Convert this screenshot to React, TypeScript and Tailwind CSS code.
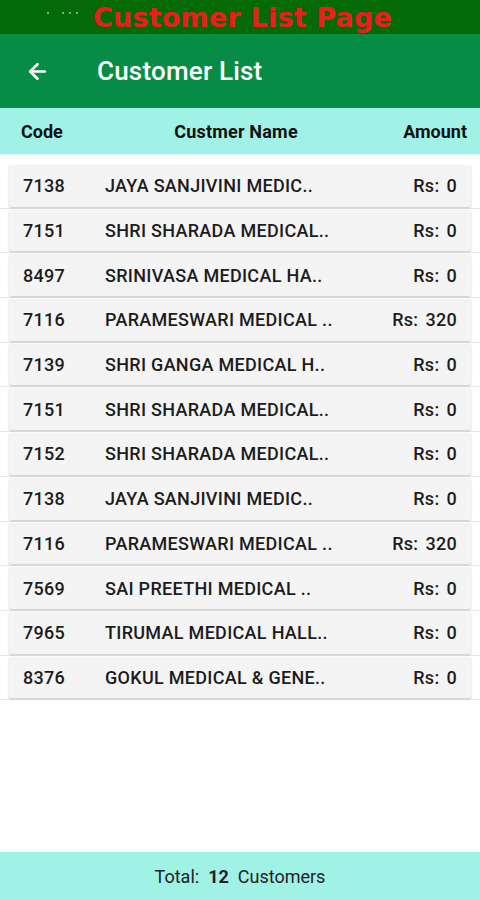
import { ArrowLeft } from "lucide-react";

const customers = [
  { code: "7138", name: "JAYA SANJIVINI MEDIC..", amount: "0" },
  { code: "7151", name: "SHRI SHARADA MEDICAL..", amount: "0" },
  { code: "8497", name: "SRINIVASA MEDICAL HA..", amount: "0" },
  { code: "7116", name: "PARAMESWARI MEDICAL ..", amount: "320" },
  { code: "7139", name: "SHRI GANGA MEDICAL H..", amount: "0" },
  { code: "7151", name: "SHRI SHARADA MEDICAL..", amount: "0" },
  { code: "7152", name: "SHRI SHARADA MEDICAL..", amount: "0" },
  { code: "7138", name: "JAYA SANJIVINI MEDIC..", amount: "0" },
  { code: "7116", name: "PARAMESWARI MEDICAL ..", amount: "320" },
  { code: "7569", name: "SAI PREETHI MEDICAL ..", amount: "0" },
  { code: "7965", name: "TIRUMAL MEDICAL HALL..", amount: "0" },
  { code: "8376", name: "GOKUL MEDICAL & GENE..", amount: "0" },
];

export default function App() {
  return (
    <div className="w-[480px] h-[900px] flex flex-col bg-white font-['Roboto',sans-serif] overflow-hidden">
      {/* status bar */}
      <div className="h-[34px] bg-[#046a08] flex items-center relative">
        <div className="flex items-center gap-[5px] ml-[47px] -mt-[9px]">
          <span className="w-[2px] h-[2px] bg-[#7fae7f]" />
          <span className="w-[2px] h-[2px] bg-[#7fae7f] ml-[8px]" />
          <span className="w-[2px] h-[2px] bg-[#7fae7f]" />
          <span className="w-[2px] h-[2px] bg-[#7fae7f]" />
        </div>
        <span className="absolute left-[93px] top-[2px] text-[27px] leading-[32px] font-bold text-[#ee1c1c] font-['DejaVu_Sans',sans-serif] tracking-[0.2px]">
          Customer List Page
        </span>
      </div>

      {/* app bar */}
      <div className="h-[74px] bg-[#078c45] flex items-center text-white">
        <ArrowLeft className="ml-[25px] w-[25px] h-[25px]" strokeWidth={2.5} />
        <span className="ml-[47px] text-[26px] font-medium tracking-[0.2px]">Customer List</span>
      </div>

      {/* header */}
      <div className="h-[46px] bg-[#a0f1e6] flex items-center pl-[21px] pr-[13px] text-[18px] font-bold text-[#111]">
        <span className="w-[100px]">Code</span>
        <span className="flex-1 text-center -ml-[16px] tracking-[0.2px]">Custmer Name</span>
        <span className="w-[100px] text-right">Amount</span>
      </div>
      <div className="h-[2px] bg-[#e3fbf8]" />

      {/* list */}
      <div className="flex flex-col pt-[8px]">
        {customers.map((c, i) => (
          <div key={i} className="py-[1px] border-b border-[#e6e6e6]">
            <div className="mx-[9px] h-[41.7px] bg-[#f4f4f4] rounded-[2px] shadow-[0_1px_2px_rgba(0,0,0,0.22)] flex items-center text-[18px] tracking-[0.3px] font-medium text-[#1c1c1c]">
              <span className="w-[96px] pl-[14px]">{c.code}</span>
              <span className="flex-1">{c.name}</span>
              <span className="pr-[14px] flex gap-[7px]">
                <span>Rs:</span>
                <span>{c.amount}</span>
              </span>
            </div>
          </div>
        ))}
      </div>

      <div className="flex-1" />

      {/* footer */}
      <div className="h-[48px] bg-[#a0f1e6] flex items-center justify-center text-[18px] text-[#222]">
        <span>Total:</span>
        <span className="font-bold ml-[9px]">12</span>
        <span className="ml-[9px]">Customers</span>
      </div>
    </div>
  );
}
